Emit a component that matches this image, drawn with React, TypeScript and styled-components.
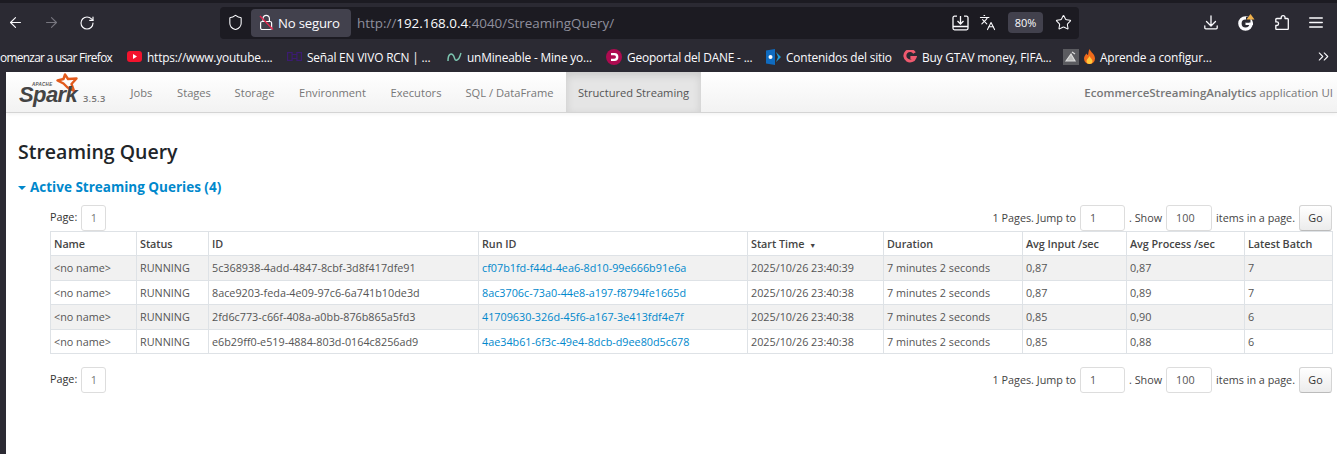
import React from "react";
import styled, { createGlobalStyle } from "styled-components";
import { ArrowLeft, ArrowRight, RotateCw, Shield, Languages, Star, ChevronsRight } from "lucide-react";

const Global = createGlobalStyle`
  html, body { margin: 0; padding: 0; width: 1337px; height: 454px; overflow: hidden; background: #2b2a33; }
  * { box-sizing: border-box; }
`;
const Shell = styled.div`
  width: 1337px; height: 454px; display: flex; flex-direction: column; overflow: hidden;
  font-family: "Open Sans", "Noto Sans", sans-serif;
`;
const TopStrip = styled.div`height: 3px; background: #1c1b22; flex: none;`;
const Toolbar = styled.div`
  height: 38px; flex: none; background: #2b2a33; display: flex; align-items: center; color: #fbfbfe; padding: 1px 0 0 7px;
`;
const NavIcons = styled.div`display: flex; align-items: center; gap: 19px; width: 213px; flex: none;`;
const UrlBar = styled.div`
  width: 859px; height: 32px; background: #1c1b22; border-radius: 4px; display: flex; align-items: center; padding-left: 7px; flex: none;
`;
const Pill = styled.div`
  height: 28px; width: 100px; background: #42414d; border-radius: 4px; margin-left: 7px; display: flex; align-items: center; gap: 4px; padding-left: 8px;
  font-size: 13.2px; color: #fbfbfe; flex: none; letter-spacing: -.2px;
`;
const Url = styled.div`
  font-size: 13.4px; color: #8f8f9d; margin-left: 6px; flex: 1; white-space: nowrap;
  b { font-weight: 400; color: #fbfbfe; }
`;
const UrlActions = styled.div`display: flex; align-items: center; gap: 10px; padding-right: 7px;`;
const Zoom = styled.div`
  width: 35px; height: 21px; border-radius: 4px; background: #42414d; font-size: 11px; display: flex; align-items: center; justify-content: center; color: #fbfbfe; margin: 0 2px 0 2px;
`;
const RightIcons = styled.div`
  display: flex; align-items: center; gap: 20px; margin-left: 125px;
`;
const Bookmarks = styled.div`
  height: 31px; flex: none; background: #2b2a33; display: flex; align-items: center; position: relative; color: #fbfbfe; font-size: 11.9px; letter-spacing: -.18px; white-space: nowrap;
`;
const Mark = styled.div<{ $w: number; $tight?: boolean }>`
  width: ${p => p.$w}px; flex: none; display: flex; align-items: center; gap: 5px; overflow: hidden;
  letter-spacing: ${p => p.$tight ? "-.7px" : "-.18px"};
`;
const More = styled.div`position: absolute; right: 5px; top: 7px; color: #fbfbfe; display: flex;`;
const Body = styled.div`flex: 1; display: flex; min-height: 0;`;
const Side = styled.div`width: 6px; background: #2b2a33; flex: none;`;
const Page = styled.div`flex: 1; background: #fff; min-width: 0; color: #212529;`;
const Nav = styled.div`
  height: 41px; display: flex; align-items: stretch; padding-left: 11px; border-bottom: 1px solid #d4d4d4;
  background: linear-gradient(to bottom, #ffffff, #f2f2f2);
  box-shadow: 0 1px 4px rgba(0,0,0,.06);
`;
const Brand = styled.div`width: 65px; position: relative; flex: none;`;
const BrandWord = styled.span`
  position: absolute; left: 2px; top: 15px; font: italic 700 22px/16px "Liberation Sans", sans-serif; color: #444; letter-spacing: -.6px;
`;
const Apache = styled.span`
  position: absolute; left: 15px; top: 11px; font: italic 700 4.500px/4px "Liberation Sans", sans-serif; color: #555; letter-spacing: .3px;
`;
const BrandStar = styled.svg`position: absolute; left: 38px; top: 1px;`;
const Version = styled.span`font-size: 9.300px; color: #777; align-self: flex-end; margin: 0 0 7px 1px; width: 35px; letter-spacing: .3px; font-weight: 600;`;
const Tab = styled.div<{ $active?: boolean; $w: number }>`
  display: flex; align-items: center; justify-content: center; width: ${p => p.$w}px; flex: none;
  font-size: 11.150px; color: ${p => p.$active ? "#555" : "#777"}; white-space: nowrap;
  background: ${p => p.$active ? "#e5e5e5" : "transparent"};
  box-shadow: ${p => p.$active ? "inset 0 3px 8px rgba(0,0,0,.125)" : "none"};
`;
const AppName = styled.div`
  margin-left: auto; padding-right: 4px; align-self: center; font-size: 11.500px; color: #777; white-space: nowrap;
  b { font-weight: 600; }
`;
const Content = styled.div`padding: 27px 0 0 12px;`;
const Title = styled.h3`margin: 0; font-size: 19.500px; line-height: 24px; font-weight: 600; color: #212529;`;
const Section = styled.h4`
  margin: 14px 0 0; font-size: 13.500px; line-height: 18px; font-weight: 700; color: #0088cc; display: flex; align-items: center; gap: 4px;
`;
const Caret = styled.span`
  width: 0; height: 0; border-left: 4px solid transparent; border-right: 4px solid transparent; border-top: 4px solid #0088cc; margin-top: 1px;
`;
const Wrap = styled.div`margin: 8px 0 0 32px; width: 1282px;`;
const Pager = styled.div`
  height: 27px; display: flex; align-items: center; font-size: 10.800px; color: #333; white-space: nowrap;
`;
const PageLabel = styled.span`margin-right: 4px; margin-top: -3px;`;
const PageBox = styled.span`
  width: 25px; height: 26px; border: 1px solid #ddd; border-radius: 3px; display: flex; align-items: center; justify-content: center; color: #777;
`;
const Right = styled.div`margin-left: auto; display: flex; align-items: center; gap: 4px; color: #444;`;
const Input = styled.span<{ $w: number }>`
  width: ${p => p.$w}px; height: 26px; border: 1px solid #ddd; border-radius: 3px; display: flex; align-items: center; padding-left: 9px; color: #555;
`;
const Go = styled.span`
  width: 33px; height: 26px; border: 1px solid #d4d4d4; border-bottom-color: #bbb; border-radius: 3px; display: flex; align-items: center; justify-content: center;
  color: #333; background: linear-gradient(#fff, #ececec);
`;
const Table = styled.table`
  width: 1282px; table-layout: fixed; border-collapse: collapse; font-size: 10.800px; color: #555;
  border: 1px solid #dee2e6;
`;
const Th = styled.th<{ $w: number }>`
  width: ${p => p.$w}px; height: 24px; padding: 0 3px; text-align: left; font-weight: 600; color: #444; border: 1px solid #dee2e6; white-space: nowrap; letter-spacing: -.05px;
`;
const Tr = styled.tr<{ $odd: boolean }>`
  background: ${p => p.$odd ? "#f1f1f1" : "#fff"};
`;
const Td = styled.td`
  height: 24.500px; padding: 0 3px; border: 1px solid #dee2e6; white-space: nowrap; overflow: hidden;
`;
const RunLink = styled.a`color: #0088cc; text-decoration: none;`;
const SortMark = styled.span`font-size: 7px; margin-left: 5px; color: #444;`;
const Spacer = styled.div`height: 12px;`;

const cols: [string, number][] = [["Name", 86], ["Status", 72], ["ID", 270], ["Run ID", 269], ["Start Time", 136], ["Duration", 139], ["Avg Input /sec", 104], ["Avg Process /sec", 118], ["Latest Batch", 88]];
const rows = [
  ["5c368938-4add-4847-8cbf-3d8f417dfe91", "cf07b1fd-f44d-4ea6-8d10-99e666b91e6a", "2025/10/26 23:40:39", "0,87", "0,87", "7"],
  ["8ace9203-feda-4e09-97c6-6a741b10de3d", "8ac3706c-73a0-44e8-a197-f8794fe1665d", "2025/10/26 23:40:38", "0,87", "0,89", "7"],
  ["2fd6c773-c66f-408a-a0bb-876b865a5fd3", "41709630-326d-45f6-a167-3e413fdf4e7f", "2025/10/26 23:40:38", "0,85", "0,90", "6"],
  ["e6b29ff0-e519-4884-803d-0164c8256ad9", "4ae34b61-6f3c-49e4-8dcb-d9ee80d5c678", "2025/10/26 23:40:38", "0,85", "0,88", "6"],
];

const PagerRow = () => (
  <Pager>
    <PageLabel>Page:</PageLabel>
    <PageBox>1</PageBox>
    <Right>
      <span>1 Pages. Jump to</span>
      <Input $w={45}>1</Input>
      <span>. Show</span>
      <Input $w={46}>100</Input>
      <span>items in a page.</span>
      <Go>Go</Go>
    </Right>
  </Pager>
);

const LockSlash = () => (
  <svg width="15" height="17" viewBox="0 0 15 17" fill="none" stroke="#fbfbfe" strokeWidth="1.2">
    <rect x="1.6" y="7.5" width="11" height="8" rx="1.5" />
    <path d="M4 7.5V4.5a3.2 3.2 0 0 1 6.4 0v3" />
    <path d="M1 2l13 13.5" stroke="#e22850" strokeWidth="1.4" />
  </svg>
);
const SaveIcon = () => (
  <svg width="17" height="16" viewBox="0 0 17 16" fill="none" stroke="#fbfbfe" strokeWidth="1.3">
    <path d="M5 1.200H2.500A1.500 1.500 0 0 0 1 2.700v10.600a1.500 1.500 0 0 0 1.500 1.500h12a1.500 1.500 0 0 0 1.500-1.500V2.700a1.500 1.500 0 0 0-1.500-1.500H12" />
    <path d="M1 11.500h15M8.500 1v7.500M5.500 6l3 3 3-3" />
  </svg>
);
const DownloadIcon = () => (
  <svg width="14" height="15" viewBox="0 0 14 15" fill="none" stroke="#fbfbfe" strokeWidth="1.3" strokeLinecap="round" strokeLinejoin="round">
    <path d="M7 1v9.500M2.500 6.500L7 11l4.500-4.500M.8 11v1.800a1 1 0 0 0 1 1h10.400a1 1 0 0 0 1-1V11" />
  </svg>
);
const GIcon = () => (
  <svg width="17" height="17" viewBox="0 0 17 17" fill="none">
    <circle cx="7.500" cy="9.500" r="5.600" stroke="#fbfbfe" strokeWidth="3.400" />
    <path d="M7.500 8.500h7.500v2.500H7.500z" fill="#fbfbfe" />
    <path d="M8 3h4.500v5.500H8z" fill="#2b2a33" />
    <path d="M12.500 0l4 5.500h-8z" fill="#f0b14b" />
  </svg>
);
const PuzzleIcon = () => (
  <svg width="14" height="15" viewBox="0 0 14 15" fill="none" stroke="#fbfbfe" strokeWidth="1.3" strokeLinejoin="round">
    <path d="M5 3.500h1.200V2.600a1.900 1.900 0 0 1 3.800 0v.9h2.300a1 1 0 0 1 1 1v9a1 1 0 0 1-1 1H1.800a1 1 0 0 1-1-1V10.500h1a1.800 1.800 0 0 0 0-3.600h-1V4.500a1 1 0 0 1 1-1z" />
  </svg>
);
const MenuIcon = () => (
  <svg width="14" height="11" viewBox="0 0 14 11" stroke="#fbfbfe" strokeWidth="1.300" strokeLinecap="round">
    <path d="M.7 1h12.600M.7 5.500h12.600M.7 10h12.600" />
  </svg>
);
const Yt = () => (
  <svg width="15" height="11" viewBox="0 0 15 11"><rect width="15" height="11" rx="3" fill="#f2132d" /><path d="M6 3l4 2.500L6 8z" fill="#fff" /></svg>
);
const Rcn = () => (
  <svg width="15" height="9" viewBox="0 0 15 9" fill="none" stroke="#3b1b70" strokeWidth="1.2"><rect x=".6" y=".6" width="4.500" height="7.800" /><rect x="9.900" y=".6" width="4.500" height="7.800" /><path d="M5 2.500h5M5 6.500h5" /></svg>
);
const Unm = () => (
  <svg width="15" height="10" viewBox="0 0 15 10" fill="none" stroke="#7cc5b0" strokeWidth="1.5"><path d="M1 9c0-7 3-8 5-6s1 6 4 5 3-5 4-7" /></svg>
);
const Dane = () => (
  <svg width="16" height="16" viewBox="0 0 16 16"><circle cx="8" cy="8" r="8" fill="#ad0b50" /><path d="M5 4h3.400a4 4 0 0 1 0 8H5V9.800h3.200a1.800 1.800 0 0 0 0-3.600H5z" fill="#fff" /></svg>
);
const Sp = () => (
  <svg width="15" height="16" viewBox="0 0 15 16"><path d="M0 1.500L9 0v16L0 14.500z" fill="#0f6bc0" /><path d="M10 3l5 5-5 5 2-5z" fill="#1c9bd9" /><circle cx="4.500" cy="8" r="2" fill="#fff" /></svg>
);
const G = () => (
  <svg width="14" height="14" viewBox="0 0 14 14" fill="none"><path d="M11.500 3A5.200 5.200 0 1 0 12 7.400H7.400" stroke="#ef5a6f" strokeWidth="3" /></svg>
);
const Thumb = () => (
  <svg width="16" height="16" viewBox="0 0 16 16"><rect width="16" height="16" fill="#5b5b60" /><path d="M3 12l5-7 4 7zM9 3l3 2" stroke="#ddd" strokeWidth="1.2" fill="#bbb" /></svg>
);
const Fire = () => (
  <svg width="11" height="15" viewBox="0 0 11 15"><path d="M5.500 0c1 3 5.500 5 5.500 9.500a5.500 5.500 0 0 1-11 0C0 7 1.500 6 2.500 4.500c.5 1 1 1.500 1.500 1.500C4.500 4 4.500 2 5.500 0z" fill="#f06a1a" /><path d="M5.500 7c.5 2 3 3 3 5a3 3 0 0 1-6 0c0-2 2.500-3 3-5z" fill="#ffc83d" /></svg>
);

export default function App() {
  return (
    <Shell>
      <Global />
      <TopStrip />
      <Toolbar>
        <NavIcons>
          <ArrowLeft size={17} strokeWidth={1.6} />
          <ArrowRight size={17} strokeWidth={1.6} color="#77767f" />
          <RotateCw size={16} strokeWidth={1.7} />
        </NavIcons>
        <UrlBar>
          <Shield size={17} strokeWidth={1.5} />
          <Pill><LockSlash />No seguro</Pill>
          <Url>http://<b>192.168.0.4</b>:4040/StreamingQuery/</Url>
          <UrlActions>
            <SaveIcon />
            <Languages size={17} strokeWidth={1.5} />
            <Zoom>80%</Zoom>
            <Star size={17} strokeWidth={1.5} />
          </UrlActions>
        </UrlBar>
        <RightIcons>
          <DownloadIcon />
          <GIcon />
          <PuzzleIcon />
          <MenuIcon />
        </RightIcons>
      </Toolbar>
      <Bookmarks>
        <Mark $w={127} $tight>omenzar a usar Firefox</Mark>
        <Mark $w={160}><Yt />https://www.youtube....</Mark>
        <Mark $w={160}><Rcn />Señal EN VIVO RCN | ...</Mark>
        <Mark $w={159}><Unm />unMineable - Mine yo...</Mark>
        <Mark $w={160}><Dane />Geoportal del DANE - ...</Mark>
        <Mark $w={137}><Sp />Contenidos del sitio</Mark>
        <Mark $w={160}><G />Buy GTAV money, FIFA...</Mark>
        <Mark $w={160}><Thumb /><Fire />Aprende a configur...</Mark>
        <More><ChevronsRight size={17} strokeWidth={1.5} /></More>
      </Bookmarks>
      <Body>
        <Side />
        <Page>
          <Nav>
            <Brand>
              <BrandStar width="24" height="20" viewBox="0 0 24 20"><path d="M10 1.500l3 4.500 8.500-.5-5 5.500 2.500 7-6.500-3.500-4-4-6-3 6-1.500z" fill="none" stroke="#e25a1c" strokeWidth="2.400" strokeLinejoin="round" /></BrandStar>
              <BrandWord>Spark</BrandWord>
              <Apache>APACHE</Apache>
            </Brand>
            <Version>3.5.3</Version>
            <Tab $w={47}>Jobs</Tab>
            <Tab $w={58}>Stages</Tab>
            <Tab $w={63}>Storage</Tab>
            <Tab $w={93}>Environment</Tab>
            <Tab $w={74}>Executors</Tab>
            <Tab $w={113}>SQL / DataFrame</Tab>
            <Tab $active $w={135}>Structured Streaming</Tab>
            <AppName><b>EcommerceStreamingAnalytics</b> application UI</AppName>
          </Nav>
          <Content>
            <Title>Streaming Query</Title>
            <Section><Caret />Active Streaming Queries (4)</Section>
            <Wrap>
              <PagerRow />
              <Table>
                <thead>
                  <tr>
                    {cols.map(([n, w]) => (
                      <Th key={n} $w={w}>{n}{n === "Start Time" && <SortMark>▼</SortMark>}</Th>
                    ))}
                  </tr>
                </thead>
                <tbody>
                  {rows.map((r, i) => (
                    <Tr key={r[0]} $odd={i % 2 === 0}>
                      <Td>&lt;no name&gt;</Td>
                      <Td>RUNNING</Td>
                      <Td>{r[0]}</Td>
                      <Td><RunLink>{r[1]}</RunLink></Td>
                      <Td>{r[2]}</Td>
                      <Td>7 minutes 2 seconds</Td>
                      <Td>{r[3]}</Td>
                      <Td>{r[4]}</Td>
                      <Td>{r[5]}</Td>
                    </Tr>
                  ))}
                </tbody>
              </Table>
              <Spacer />
              <PagerRow />
            </Wrap>
          </Content>
        </Page>
      </Body>
    </Shell>
  );
}
